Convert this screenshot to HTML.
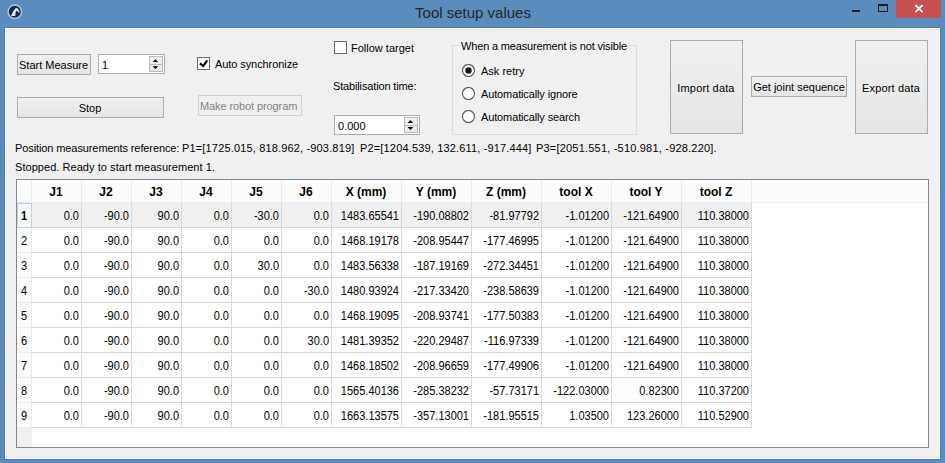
<!DOCTYPE html><html><head><meta charset="utf-8"><style>
html,body{margin:0;padding:0;width:945px;height:463px;overflow:hidden;background:#5a8dbd;}
body{position:relative;font-family:"Liberation Sans",sans-serif;font-size:11px;color:#000;}
.b{position:absolute;}
.t{position:absolute;white-space:pre;line-height:13px;}
.c{text-align:center;}
.r{text-align:right;}
.bold{font-weight:bold;}
</style></head><body>

<div class="t c" style="left:273px;top:4px;width:400px;font-size:15px;line-height:18px;color:#262626;">Tool setup values</div>
<svg class="b" style="left:7px;top:4px" width="16" height="16" viewBox="0 0 16 16">
<circle cx="7.8" cy="7.7" r="6.7" fill="#0d2c55" stroke="#bcc6d0" stroke-width="1.4"/>
<path d="M4.1 11.9 L8.5 11.9 L8.3 10.6 L8.9 7.4 L9.7 6.6 L11.8 8.8 L12.7 8.3 L10.7 4.4 L8.9 4.0 L6.8 6.4 L4.8 10.3 Z" fill="#e6ecf2"/>
</svg>
<div class="b" style="left:896px;top:0px;width:45px;height:18px;background:#c75050;"></div>
<svg class="b" style="left:896px;top:0px" width="45" height="18" viewBox="0 0 45 18">
<path d="M19.4 5 L26.6 12.2 M26.6 5 L19.4 12.2" stroke="#fff" stroke-width="1.8"/>
</svg>
<div class="b" style="left:878px;top:4px;width:10px;height:8px;box-sizing:border-box;border:1px solid #1c1c1c;border-top-width:2px;"></div>
<div class="b" style="left:852px;top:10px;width:8px;height:2px;background:#1c1c1c;"></div>
<div class="b" style="left:4px;top:27px;width:937px;height:433px;background:#4f7eab;"></div>
<div class="b" style="left:5px;top:28px;width:935px;height:431px;background:#fbfbfb;"></div>
<div class="b" style="left:6px;top:29px;width:933px;height:429px;background:#f0f0f0;"></div>
<div class="b" style="left:17px;top:54px;width:74px;height:21px;box-sizing:border-box;border:1px solid #acacac;background:linear-gradient(#f0f0f0,#e5e5e5);"></div>
<div class="t " style="left:19px;top:59px;">Start Measure</div>
<div class="b" style="left:98px;top:54px;width:67px;height:20px;box-sizing:border-box;border:1px solid #adadad;background:#fff;"></div>
<div class="b" style="left:149px;top:56px;width:14px;height:16px;box-sizing:border-box;border:1px solid #b8b8b8;background:linear-gradient(#f2f2f2,#e8e8e8);"></div>
<div class="b" style="left:150px;top:64px;width:12px;height:1px;background:#b8b8b8;"></div>
<svg class="b" style="left:150px;top:57px" width="12" height="14" viewBox="0 0 12 14"><path d="M2.6 5.1 L5.4 2.2 L8.2 5.1 Z M2.6 9.2 L8.2 9.2 L5.4 12.1 Z" fill="#000"/></svg>
<div class="t " style="left:102px;top:59px;">1</div>
<div class="b" style="left:17px;top:97px;width:147px;height:21px;box-sizing:border-box;border:1px solid #acacac;background:linear-gradient(#f0f0f0,#e5e5e5);"></div>
<div class="t c " style="left:-10px;top:102px;width:200px;">Stop</div>
<div class="b" style="left:197px;top:57px;width:13px;height:13px;box-sizing:border-box;border:1px solid #6a6a6a;background:#fff;"></div>
<svg class="b" style="left:197px;top:57px" width="13" height="13" viewBox="0 0 13 13"><path d="M2.9 6.4 L6.2 9 L10.3 3.3" stroke="#000" stroke-width="2.2" fill="none"/></svg>
<div class="t " style="left:215px;top:58px;letter-spacing:-0.08px;">Auto synchronize</div>
<div class="b" style="left:198px;top:95px;width:104px;height:21px;box-sizing:border-box;border:1px solid #cfcfcf;background:#f0f0f0;"></div>
<div class="t " style="left:200px;top:100px;color:#838383;letter-spacing:-0.1px;">Make robot program</div>
<div class="b" style="left:334px;top:41px;width:13px;height:13px;box-sizing:border-box;border:1px solid #6a6a6a;background:#fff;"></div>
<div class="t " style="left:351px;top:42px;">Follow target</div>
<div class="t " style="left:333px;top:80px;letter-spacing:-0.15px;">Stabilisation time:</div>
<div class="b" style="left:334px;top:115px;width:86px;height:20px;box-sizing:border-box;border:1px solid #adadad;background:#fff;"></div>
<div class="b" style="left:404px;top:117px;width:14px;height:16px;box-sizing:border-box;border:1px solid #b8b8b8;background:linear-gradient(#f2f2f2,#e8e8e8);"></div>
<div class="b" style="left:405px;top:125px;width:12px;height:1px;background:#b8b8b8;"></div>
<svg class="b" style="left:405px;top:117px" width="12" height="16" viewBox="0 0 12 16"><path d="M2.6 5.9 L5.45 3 L8.3 5.9 Z M2.6 10 L8.3 10 L5.45 12.9 Z" fill="#000"/></svg>
<div class="t " style="left:338px;top:120px;">0.000</div>
<div class="b" style="left:452px;top:45px;width:185px;height:90px;box-sizing:border-box;border:1px solid #dcdcdc;"></div>
<div class="b" style="left:460px;top:40px;width:169px;height:11px;background:#f0f0f0;"></div>
<div class="t " style="left:461px;top:40px;letter-spacing:-0.16px;">When a measurement is not visible</div>
<svg class="b" style="left:462px;top:64.0px" width="13" height="13" viewBox="0 0 13 13"><circle cx="6.5" cy="6.5" r="6" fill="#fff" stroke="#555" stroke-width="1.1"/><circle cx="6.5" cy="6.5" r="3.2" fill="#1a1a1a"/></svg>
<div class="t " style="left:481px;top:65px;">Ask retry</div>
<svg class="b" style="left:462px;top:87.0px" width="13" height="13" viewBox="0 0 13 13"><circle cx="6.5" cy="6.5" r="6" fill="#fff" stroke="#555" stroke-width="1.1"/></svg>
<div class="t " style="left:481px;top:88px;letter-spacing:-0.13px;">Automatically ignore</div>
<svg class="b" style="left:462px;top:110.0px" width="13" height="13" viewBox="0 0 13 13"><circle cx="6.5" cy="6.5" r="6" fill="#fff" stroke="#555" stroke-width="1.1"/></svg>
<div class="t " style="left:481px;top:111px;letter-spacing:-0.13px;">Automatically search</div>
<div class="b" style="left:670px;top:40px;width:73px;height:94px;box-sizing:border-box;border:1px solid #acacac;background:linear-gradient(#f0f0f0,#e5e5e5);"></div>
<div class="t c " style="left:606px;top:82px;width:200px;letter-spacing:0.15px;">Import data</div>
<div class="b" style="left:751px;top:76px;width:96px;height:21px;box-sizing:border-box;border:1px solid #acacac;background:linear-gradient(#f0f0f0,#e5e5e5);"></div>
<div class="t c " style="left:699px;top:81px;width:200px;">Get joint sequence</div>
<div class="b" style="left:855px;top:40px;width:73px;height:94px;box-sizing:border-box;border:1px solid #acacac;background:linear-gradient(#f0f0f0,#e5e5e5);"></div>
<div class="t c " style="left:791px;top:82px;width:200px;letter-spacing:0.15px;">Export data</div>
<div class="t " style="left:15px;top:142px;letter-spacing:-0.1px;">Position measurements reference:</div>
<div class="t " style="left:182px;top:142px;letter-spacing:0.16px;">P1=[1725.015, 818.962, -903.819]</div>
<div class="t " style="left:360px;top:142px;letter-spacing:0.16px;">P2=[1204.539, 132.611, -917.444]</div>
<div class="t " style="left:536px;top:142px;letter-spacing:0.2px;">P3=[2051.551, -510.981, -928.220].</div>
<div class="t " style="left:15px;top:161px;letter-spacing:0.05px;">Stopped. Ready to start measurement 1.</div>
<div class="b" style="left:16px;top:179px;width:913px;height:269px;background:#828790;"></div>
<div class="b" style="left:17px;top:180px;width:911px;height:267px;background:#fff;"></div>
<div class="b" style="left:17px;top:180px;width:911px;height:23px;background:#fcfcfc;"></div>
<div class="b" style="left:17px;top:202px;width:911px;height:1px;background:#e3ebf5;"></div>
<div class="b" style="left:17px;top:203px;width:14px;height:225px;background:#fcfcfc;"></div>
<div class="b" style="left:17px;top:428px;width:15px;height:19px;background:#f0f0f0;"></div>
<div class="b" style="left:31px;top:180px;width:1px;height:23px;background:#e3ebf5;"></div>
<div class="b" style="left:81px;top:180px;width:1px;height:23px;background:#e3ebf5;"></div>
<div class="b" style="left:131px;top:180px;width:1px;height:23px;background:#e3ebf5;"></div>
<div class="b" style="left:181px;top:180px;width:1px;height:23px;background:#e3ebf5;"></div>
<div class="b" style="left:231px;top:180px;width:1px;height:23px;background:#e3ebf5;"></div>
<div class="b" style="left:281px;top:180px;width:1px;height:23px;background:#e3ebf5;"></div>
<div class="b" style="left:331px;top:180px;width:1px;height:23px;background:#e3ebf5;"></div>
<div class="b" style="left:401px;top:180px;width:1px;height:23px;background:#e3ebf5;"></div>
<div class="b" style="left:471px;top:180px;width:1px;height:23px;background:#e3ebf5;"></div>
<div class="b" style="left:541px;top:180px;width:1px;height:23px;background:#e3ebf5;"></div>
<div class="b" style="left:611px;top:180px;width:1px;height:23px;background:#e3ebf5;"></div>
<div class="b" style="left:681px;top:180px;width:1px;height:23px;background:#e3ebf5;"></div>
<div class="b" style="left:751px;top:180px;width:1px;height:23px;background:#e3ebf5;"></div>
<div class="t c bold" style="left:-44px;top:186px;width:200px;font-size:12px;">J1</div>
<div class="t c bold" style="left:6px;top:186px;width:200px;font-size:12px;">J2</div>
<div class="t c bold" style="left:56px;top:186px;width:200px;font-size:12px;">J3</div>
<div class="t c bold" style="left:106px;top:186px;width:200px;font-size:12px;">J4</div>
<div class="t c bold" style="left:156px;top:186px;width:200px;font-size:12px;">J5</div>
<div class="t c bold" style="left:206px;top:186px;width:200px;font-size:12px;">J6</div>
<div class="t c bold" style="left:266px;top:186px;width:200px;font-size:12px;">X (mm)</div>
<div class="t c bold" style="left:336px;top:186px;width:200px;font-size:12px;">Y (mm)</div>
<div class="t c bold" style="left:406px;top:186px;width:200px;font-size:12px;">Z (mm)</div>
<div class="t c bold" style="left:476px;top:186px;width:200px;font-size:12px;">tool X</div>
<div class="t c bold" style="left:546px;top:186px;width:200px;font-size:12px;">tool Y</div>
<div class="t c bold" style="left:616px;top:186px;width:200px;font-size:12px;">tool Z</div>
<div class="b" style="left:32px;top:203px;width:719px;height:24px;background:#f0f0f0;"></div>
<div class="b" style="left:32px;top:227px;width:720px;height:1px;background:#d8d8d8;"></div>
<div class="b" style="left:17px;top:227px;width:14px;height:1px;background:#e3ebf5;"></div>
<div class="b" style="left:32px;top:252px;width:720px;height:1px;background:#d8d8d8;"></div>
<div class="b" style="left:17px;top:252px;width:14px;height:1px;background:#e3ebf5;"></div>
<div class="b" style="left:32px;top:277px;width:720px;height:1px;background:#d8d8d8;"></div>
<div class="b" style="left:17px;top:277px;width:14px;height:1px;background:#e3ebf5;"></div>
<div class="b" style="left:32px;top:302px;width:720px;height:1px;background:#d8d8d8;"></div>
<div class="b" style="left:17px;top:302px;width:14px;height:1px;background:#e3ebf5;"></div>
<div class="b" style="left:32px;top:327px;width:720px;height:1px;background:#d8d8d8;"></div>
<div class="b" style="left:17px;top:327px;width:14px;height:1px;background:#e3ebf5;"></div>
<div class="b" style="left:32px;top:352px;width:720px;height:1px;background:#d8d8d8;"></div>
<div class="b" style="left:17px;top:352px;width:14px;height:1px;background:#e3ebf5;"></div>
<div class="b" style="left:32px;top:377px;width:720px;height:1px;background:#d8d8d8;"></div>
<div class="b" style="left:17px;top:377px;width:14px;height:1px;background:#e3ebf5;"></div>
<div class="b" style="left:32px;top:402px;width:720px;height:1px;background:#d8d8d8;"></div>
<div class="b" style="left:17px;top:402px;width:14px;height:1px;background:#e3ebf5;"></div>
<div class="b" style="left:32px;top:427px;width:720px;height:1px;background:#d8d8d8;"></div>
<div class="b" style="left:17px;top:427px;width:14px;height:1px;background:#e3ebf5;"></div>
<div class="b" style="left:81px;top:203px;width:1px;height:225px;background:#d8d8d8;"></div>
<div class="b" style="left:131px;top:203px;width:1px;height:225px;background:#d8d8d8;"></div>
<div class="b" style="left:181px;top:203px;width:1px;height:225px;background:#d8d8d8;"></div>
<div class="b" style="left:231px;top:203px;width:1px;height:225px;background:#d8d8d8;"></div>
<div class="b" style="left:281px;top:203px;width:1px;height:225px;background:#d8d8d8;"></div>
<div class="b" style="left:331px;top:203px;width:1px;height:225px;background:#d8d8d8;"></div>
<div class="b" style="left:401px;top:203px;width:1px;height:225px;background:#d8d8d8;"></div>
<div class="b" style="left:471px;top:203px;width:1px;height:225px;background:#d8d8d8;"></div>
<div class="b" style="left:541px;top:203px;width:1px;height:225px;background:#d8d8d8;"></div>
<div class="b" style="left:611px;top:203px;width:1px;height:225px;background:#d8d8d8;"></div>
<div class="b" style="left:681px;top:203px;width:1px;height:225px;background:#d8d8d8;"></div>
<div class="b" style="left:751px;top:203px;width:1px;height:225px;background:#d8d8d8;"></div>
<div class="b" style="left:31px;top:203px;width:1px;height:225px;background:#e3ebf5;"></div>
<div class="b" style="left:17px;top:203px;width:15px;height:25px;box-sizing:border-box;border:1px solid #c5cfdc;background:#f7f9fc;"></div>
<div class="t c bold" style="left:-76px;top:210px;width:200px;font-size:12px;transform:scaleX(0.917);">1</div>
<div class="t r " style="left:-121.5px;top:210px;width:200px;font-size:12px;transform:scaleX(0.917);transform-origin:100% 50%;">0.0</div>
<div class="t r " style="left:-71.5px;top:210px;width:200px;font-size:12px;transform:scaleX(0.917);transform-origin:100% 50%;">-90.0</div>
<div class="t r " style="left:-21.5px;top:210px;width:200px;font-size:12px;transform:scaleX(0.917);transform-origin:100% 50%;">90.0</div>
<div class="t r " style="left:28.5px;top:210px;width:200px;font-size:12px;transform:scaleX(0.917);transform-origin:100% 50%;">0.0</div>
<div class="t r " style="left:78.5px;top:210px;width:200px;font-size:12px;transform:scaleX(0.917);transform-origin:100% 50%;">-30.0</div>
<div class="t r " style="left:128.5px;top:210px;width:200px;font-size:12px;transform:scaleX(0.917);transform-origin:100% 50%;">0.0</div>
<div class="t r " style="left:198.5px;top:210px;width:200px;font-size:12px;transform:scaleX(0.917);transform-origin:100% 50%;">1483.65541</div>
<div class="t r " style="left:268.5px;top:210px;width:200px;font-size:12px;transform:scaleX(0.917);transform-origin:100% 50%;">-190.08802</div>
<div class="t r " style="left:338.5px;top:210px;width:200px;font-size:12px;transform:scaleX(0.917);transform-origin:100% 50%;">-81.97792</div>
<div class="t r " style="left:408.5px;top:210px;width:200px;font-size:12px;transform:scaleX(0.917);transform-origin:100% 50%;">-1.01200</div>
<div class="t r " style="left:478.5px;top:210px;width:200px;font-size:12px;transform:scaleX(0.917);transform-origin:100% 50%;">-121.64900</div>
<div class="t r " style="left:548.5px;top:210px;width:200px;font-size:12px;transform:scaleX(0.917);transform-origin:100% 50%;">110.38000</div>
<div class="t c " style="left:-76px;top:235px;width:200px;font-size:12px;transform:scaleX(0.917);">2</div>
<div class="t r " style="left:-121.5px;top:235px;width:200px;font-size:12px;transform:scaleX(0.917);transform-origin:100% 50%;">0.0</div>
<div class="t r " style="left:-71.5px;top:235px;width:200px;font-size:12px;transform:scaleX(0.917);transform-origin:100% 50%;">-90.0</div>
<div class="t r " style="left:-21.5px;top:235px;width:200px;font-size:12px;transform:scaleX(0.917);transform-origin:100% 50%;">90.0</div>
<div class="t r " style="left:28.5px;top:235px;width:200px;font-size:12px;transform:scaleX(0.917);transform-origin:100% 50%;">0.0</div>
<div class="t r " style="left:78.5px;top:235px;width:200px;font-size:12px;transform:scaleX(0.917);transform-origin:100% 50%;">0.0</div>
<div class="t r " style="left:128.5px;top:235px;width:200px;font-size:12px;transform:scaleX(0.917);transform-origin:100% 50%;">0.0</div>
<div class="t r " style="left:198.5px;top:235px;width:200px;font-size:12px;transform:scaleX(0.917);transform-origin:100% 50%;">1468.19178</div>
<div class="t r " style="left:268.5px;top:235px;width:200px;font-size:12px;transform:scaleX(0.917);transform-origin:100% 50%;">-208.95447</div>
<div class="t r " style="left:338.5px;top:235px;width:200px;font-size:12px;transform:scaleX(0.917);transform-origin:100% 50%;">-177.46995</div>
<div class="t r " style="left:408.5px;top:235px;width:200px;font-size:12px;transform:scaleX(0.917);transform-origin:100% 50%;">-1.01200</div>
<div class="t r " style="left:478.5px;top:235px;width:200px;font-size:12px;transform:scaleX(0.917);transform-origin:100% 50%;">-121.64900</div>
<div class="t r " style="left:548.5px;top:235px;width:200px;font-size:12px;transform:scaleX(0.917);transform-origin:100% 50%;">110.38000</div>
<div class="t c " style="left:-76px;top:260px;width:200px;font-size:12px;transform:scaleX(0.917);">3</div>
<div class="t r " style="left:-121.5px;top:260px;width:200px;font-size:12px;transform:scaleX(0.917);transform-origin:100% 50%;">0.0</div>
<div class="t r " style="left:-71.5px;top:260px;width:200px;font-size:12px;transform:scaleX(0.917);transform-origin:100% 50%;">-90.0</div>
<div class="t r " style="left:-21.5px;top:260px;width:200px;font-size:12px;transform:scaleX(0.917);transform-origin:100% 50%;">90.0</div>
<div class="t r " style="left:28.5px;top:260px;width:200px;font-size:12px;transform:scaleX(0.917);transform-origin:100% 50%;">0.0</div>
<div class="t r " style="left:78.5px;top:260px;width:200px;font-size:12px;transform:scaleX(0.917);transform-origin:100% 50%;">30.0</div>
<div class="t r " style="left:128.5px;top:260px;width:200px;font-size:12px;transform:scaleX(0.917);transform-origin:100% 50%;">0.0</div>
<div class="t r " style="left:198.5px;top:260px;width:200px;font-size:12px;transform:scaleX(0.917);transform-origin:100% 50%;">1483.56338</div>
<div class="t r " style="left:268.5px;top:260px;width:200px;font-size:12px;transform:scaleX(0.917);transform-origin:100% 50%;">-187.19169</div>
<div class="t r " style="left:338.5px;top:260px;width:200px;font-size:12px;transform:scaleX(0.917);transform-origin:100% 50%;">-272.34451</div>
<div class="t r " style="left:408.5px;top:260px;width:200px;font-size:12px;transform:scaleX(0.917);transform-origin:100% 50%;">-1.01200</div>
<div class="t r " style="left:478.5px;top:260px;width:200px;font-size:12px;transform:scaleX(0.917);transform-origin:100% 50%;">-121.64900</div>
<div class="t r " style="left:548.5px;top:260px;width:200px;font-size:12px;transform:scaleX(0.917);transform-origin:100% 50%;">110.38000</div>
<div class="t c " style="left:-76px;top:285px;width:200px;font-size:12px;transform:scaleX(0.917);">4</div>
<div class="t r " style="left:-121.5px;top:285px;width:200px;font-size:12px;transform:scaleX(0.917);transform-origin:100% 50%;">0.0</div>
<div class="t r " style="left:-71.5px;top:285px;width:200px;font-size:12px;transform:scaleX(0.917);transform-origin:100% 50%;">-90.0</div>
<div class="t r " style="left:-21.5px;top:285px;width:200px;font-size:12px;transform:scaleX(0.917);transform-origin:100% 50%;">90.0</div>
<div class="t r " style="left:28.5px;top:285px;width:200px;font-size:12px;transform:scaleX(0.917);transform-origin:100% 50%;">0.0</div>
<div class="t r " style="left:78.5px;top:285px;width:200px;font-size:12px;transform:scaleX(0.917);transform-origin:100% 50%;">0.0</div>
<div class="t r " style="left:128.5px;top:285px;width:200px;font-size:12px;transform:scaleX(0.917);transform-origin:100% 50%;">-30.0</div>
<div class="t r " style="left:198.5px;top:285px;width:200px;font-size:12px;transform:scaleX(0.917);transform-origin:100% 50%;">1480.93924</div>
<div class="t r " style="left:268.5px;top:285px;width:200px;font-size:12px;transform:scaleX(0.917);transform-origin:100% 50%;">-217.33420</div>
<div class="t r " style="left:338.5px;top:285px;width:200px;font-size:12px;transform:scaleX(0.917);transform-origin:100% 50%;">-238.58639</div>
<div class="t r " style="left:408.5px;top:285px;width:200px;font-size:12px;transform:scaleX(0.917);transform-origin:100% 50%;">-1.01200</div>
<div class="t r " style="left:478.5px;top:285px;width:200px;font-size:12px;transform:scaleX(0.917);transform-origin:100% 50%;">-121.64900</div>
<div class="t r " style="left:548.5px;top:285px;width:200px;font-size:12px;transform:scaleX(0.917);transform-origin:100% 50%;">110.38000</div>
<div class="t c " style="left:-76px;top:310px;width:200px;font-size:12px;transform:scaleX(0.917);">5</div>
<div class="t r " style="left:-121.5px;top:310px;width:200px;font-size:12px;transform:scaleX(0.917);transform-origin:100% 50%;">0.0</div>
<div class="t r " style="left:-71.5px;top:310px;width:200px;font-size:12px;transform:scaleX(0.917);transform-origin:100% 50%;">-90.0</div>
<div class="t r " style="left:-21.5px;top:310px;width:200px;font-size:12px;transform:scaleX(0.917);transform-origin:100% 50%;">90.0</div>
<div class="t r " style="left:28.5px;top:310px;width:200px;font-size:12px;transform:scaleX(0.917);transform-origin:100% 50%;">0.0</div>
<div class="t r " style="left:78.5px;top:310px;width:200px;font-size:12px;transform:scaleX(0.917);transform-origin:100% 50%;">0.0</div>
<div class="t r " style="left:128.5px;top:310px;width:200px;font-size:12px;transform:scaleX(0.917);transform-origin:100% 50%;">0.0</div>
<div class="t r " style="left:198.5px;top:310px;width:200px;font-size:12px;transform:scaleX(0.917);transform-origin:100% 50%;">1468.19095</div>
<div class="t r " style="left:268.5px;top:310px;width:200px;font-size:12px;transform:scaleX(0.917);transform-origin:100% 50%;">-208.93741</div>
<div class="t r " style="left:338.5px;top:310px;width:200px;font-size:12px;transform:scaleX(0.917);transform-origin:100% 50%;">-177.50383</div>
<div class="t r " style="left:408.5px;top:310px;width:200px;font-size:12px;transform:scaleX(0.917);transform-origin:100% 50%;">-1.01200</div>
<div class="t r " style="left:478.5px;top:310px;width:200px;font-size:12px;transform:scaleX(0.917);transform-origin:100% 50%;">-121.64900</div>
<div class="t r " style="left:548.5px;top:310px;width:200px;font-size:12px;transform:scaleX(0.917);transform-origin:100% 50%;">110.38000</div>
<div class="t c " style="left:-76px;top:335px;width:200px;font-size:12px;transform:scaleX(0.917);">6</div>
<div class="t r " style="left:-121.5px;top:335px;width:200px;font-size:12px;transform:scaleX(0.917);transform-origin:100% 50%;">0.0</div>
<div class="t r " style="left:-71.5px;top:335px;width:200px;font-size:12px;transform:scaleX(0.917);transform-origin:100% 50%;">-90.0</div>
<div class="t r " style="left:-21.5px;top:335px;width:200px;font-size:12px;transform:scaleX(0.917);transform-origin:100% 50%;">90.0</div>
<div class="t r " style="left:28.5px;top:335px;width:200px;font-size:12px;transform:scaleX(0.917);transform-origin:100% 50%;">0.0</div>
<div class="t r " style="left:78.5px;top:335px;width:200px;font-size:12px;transform:scaleX(0.917);transform-origin:100% 50%;">0.0</div>
<div class="t r " style="left:128.5px;top:335px;width:200px;font-size:12px;transform:scaleX(0.917);transform-origin:100% 50%;">30.0</div>
<div class="t r " style="left:198.5px;top:335px;width:200px;font-size:12px;transform:scaleX(0.917);transform-origin:100% 50%;">1481.39352</div>
<div class="t r " style="left:268.5px;top:335px;width:200px;font-size:12px;transform:scaleX(0.917);transform-origin:100% 50%;">-220.29487</div>
<div class="t r " style="left:338.5px;top:335px;width:200px;font-size:12px;transform:scaleX(0.917);transform-origin:100% 50%;">-116.97339</div>
<div class="t r " style="left:408.5px;top:335px;width:200px;font-size:12px;transform:scaleX(0.917);transform-origin:100% 50%;">-1.01200</div>
<div class="t r " style="left:478.5px;top:335px;width:200px;font-size:12px;transform:scaleX(0.917);transform-origin:100% 50%;">-121.64900</div>
<div class="t r " style="left:548.5px;top:335px;width:200px;font-size:12px;transform:scaleX(0.917);transform-origin:100% 50%;">110.38000</div>
<div class="t c " style="left:-76px;top:360px;width:200px;font-size:12px;transform:scaleX(0.917);">7</div>
<div class="t r " style="left:-121.5px;top:360px;width:200px;font-size:12px;transform:scaleX(0.917);transform-origin:100% 50%;">0.0</div>
<div class="t r " style="left:-71.5px;top:360px;width:200px;font-size:12px;transform:scaleX(0.917);transform-origin:100% 50%;">-90.0</div>
<div class="t r " style="left:-21.5px;top:360px;width:200px;font-size:12px;transform:scaleX(0.917);transform-origin:100% 50%;">90.0</div>
<div class="t r " style="left:28.5px;top:360px;width:200px;font-size:12px;transform:scaleX(0.917);transform-origin:100% 50%;">0.0</div>
<div class="t r " style="left:78.5px;top:360px;width:200px;font-size:12px;transform:scaleX(0.917);transform-origin:100% 50%;">0.0</div>
<div class="t r " style="left:128.5px;top:360px;width:200px;font-size:12px;transform:scaleX(0.917);transform-origin:100% 50%;">0.0</div>
<div class="t r " style="left:198.5px;top:360px;width:200px;font-size:12px;transform:scaleX(0.917);transform-origin:100% 50%;">1468.18502</div>
<div class="t r " style="left:268.5px;top:360px;width:200px;font-size:12px;transform:scaleX(0.917);transform-origin:100% 50%;">-208.96659</div>
<div class="t r " style="left:338.5px;top:360px;width:200px;font-size:12px;transform:scaleX(0.917);transform-origin:100% 50%;">-177.49906</div>
<div class="t r " style="left:408.5px;top:360px;width:200px;font-size:12px;transform:scaleX(0.917);transform-origin:100% 50%;">-1.01200</div>
<div class="t r " style="left:478.5px;top:360px;width:200px;font-size:12px;transform:scaleX(0.917);transform-origin:100% 50%;">-121.64900</div>
<div class="t r " style="left:548.5px;top:360px;width:200px;font-size:12px;transform:scaleX(0.917);transform-origin:100% 50%;">110.38000</div>
<div class="t c " style="left:-76px;top:385px;width:200px;font-size:12px;transform:scaleX(0.917);">8</div>
<div class="t r " style="left:-121.5px;top:385px;width:200px;font-size:12px;transform:scaleX(0.917);transform-origin:100% 50%;">0.0</div>
<div class="t r " style="left:-71.5px;top:385px;width:200px;font-size:12px;transform:scaleX(0.917);transform-origin:100% 50%;">-90.0</div>
<div class="t r " style="left:-21.5px;top:385px;width:200px;font-size:12px;transform:scaleX(0.917);transform-origin:100% 50%;">90.0</div>
<div class="t r " style="left:28.5px;top:385px;width:200px;font-size:12px;transform:scaleX(0.917);transform-origin:100% 50%;">0.0</div>
<div class="t r " style="left:78.5px;top:385px;width:200px;font-size:12px;transform:scaleX(0.917);transform-origin:100% 50%;">0.0</div>
<div class="t r " style="left:128.5px;top:385px;width:200px;font-size:12px;transform:scaleX(0.917);transform-origin:100% 50%;">0.0</div>
<div class="t r " style="left:198.5px;top:385px;width:200px;font-size:12px;transform:scaleX(0.917);transform-origin:100% 50%;">1565.40136</div>
<div class="t r " style="left:268.5px;top:385px;width:200px;font-size:12px;transform:scaleX(0.917);transform-origin:100% 50%;">-285.38232</div>
<div class="t r " style="left:338.5px;top:385px;width:200px;font-size:12px;transform:scaleX(0.917);transform-origin:100% 50%;">-57.73171</div>
<div class="t r " style="left:408.5px;top:385px;width:200px;font-size:12px;transform:scaleX(0.917);transform-origin:100% 50%;">-122.03000</div>
<div class="t r " style="left:478.5px;top:385px;width:200px;font-size:12px;transform:scaleX(0.917);transform-origin:100% 50%;">0.82300</div>
<div class="t r " style="left:548.5px;top:385px;width:200px;font-size:12px;transform:scaleX(0.917);transform-origin:100% 50%;">110.37200</div>
<div class="t c " style="left:-76px;top:410px;width:200px;font-size:12px;transform:scaleX(0.917);">9</div>
<div class="t r " style="left:-121.5px;top:410px;width:200px;font-size:12px;transform:scaleX(0.917);transform-origin:100% 50%;">0.0</div>
<div class="t r " style="left:-71.5px;top:410px;width:200px;font-size:12px;transform:scaleX(0.917);transform-origin:100% 50%;">-90.0</div>
<div class="t r " style="left:-21.5px;top:410px;width:200px;font-size:12px;transform:scaleX(0.917);transform-origin:100% 50%;">90.0</div>
<div class="t r " style="left:28.5px;top:410px;width:200px;font-size:12px;transform:scaleX(0.917);transform-origin:100% 50%;">0.0</div>
<div class="t r " style="left:78.5px;top:410px;width:200px;font-size:12px;transform:scaleX(0.917);transform-origin:100% 50%;">0.0</div>
<div class="t r " style="left:128.5px;top:410px;width:200px;font-size:12px;transform:scaleX(0.917);transform-origin:100% 50%;">0.0</div>
<div class="t r " style="left:198.5px;top:410px;width:200px;font-size:12px;transform:scaleX(0.917);transform-origin:100% 50%;">1663.13575</div>
<div class="t r " style="left:268.5px;top:410px;width:200px;font-size:12px;transform:scaleX(0.917);transform-origin:100% 50%;">-357.13001</div>
<div class="t r " style="left:338.5px;top:410px;width:200px;font-size:12px;transform:scaleX(0.917);transform-origin:100% 50%;">-181.95515</div>
<div class="t r " style="left:408.5px;top:410px;width:200px;font-size:12px;transform:scaleX(0.917);transform-origin:100% 50%;">1.03500</div>
<div class="t r " style="left:478.5px;top:410px;width:200px;font-size:12px;transform:scaleX(0.917);transform-origin:100% 50%;">123.26000</div>
<div class="t r " style="left:548.5px;top:410px;width:200px;font-size:12px;transform:scaleX(0.917);transform-origin:100% 50%;">110.52900</div>
</body></html>
